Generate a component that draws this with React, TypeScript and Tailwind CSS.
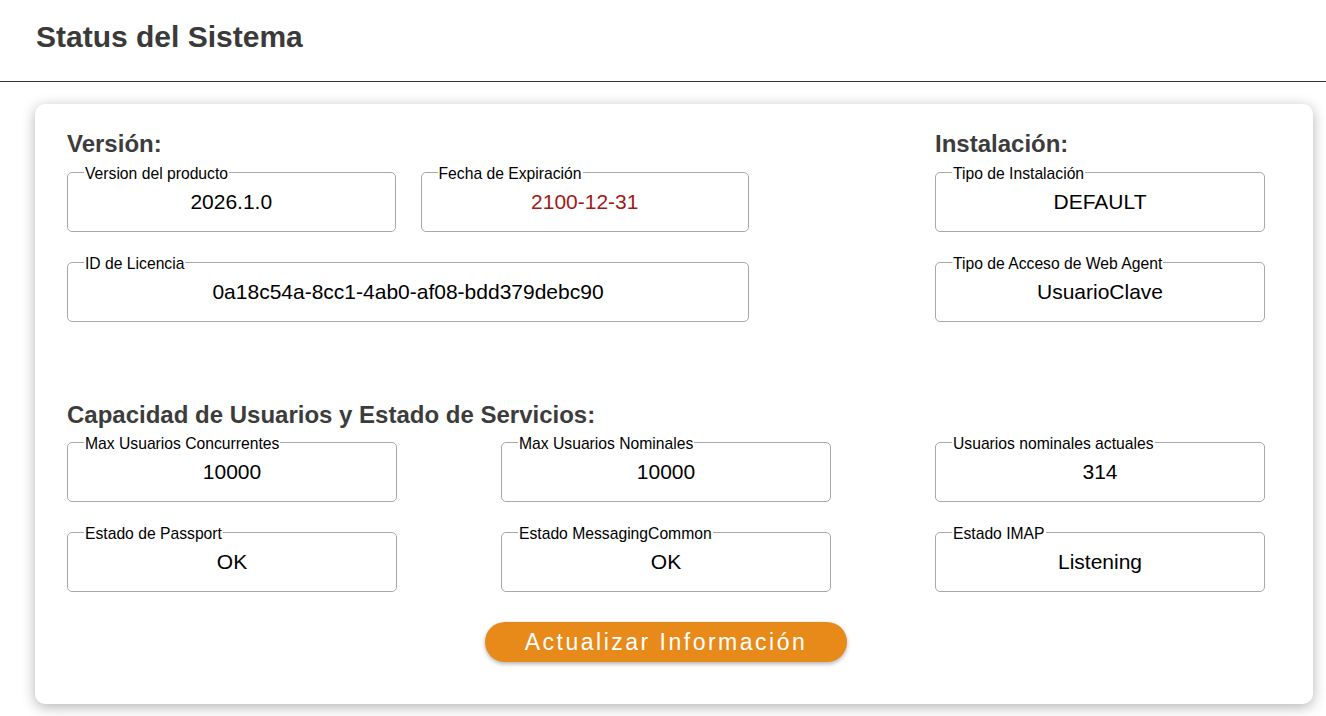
const font = { fontFamily: '"Liberation Sans", Arial, sans-serif' };

type Field = { label: string; value: string; red?: boolean };

function Box({ label, value, red }: Field) {
  return (
    <div className="relative flex h-[60px] items-center justify-center rounded-[5px] border border-[#a8a8a8] bg-white">
      <span className="absolute left-[16px] top-[-7px] bg-white px-[1px] text-[15.7px] leading-[16px] text-black">
        {label}
      </span>
      <span className={`text-[21px] leading-[24px] ${red ? "text-[#a31818]" : "text-black"}`}>{value}</span>
    </div>
  );
}

function Heading({ children }: { children: React.ReactNode }) {
  return <h2 className="text-[24px] font-bold leading-[28px] text-[#3c3c3c]">{children}</h2>;
}

const capacity: Field[] = [
  { label: "Max Usuarios Concurrentes", value: "10000" },
  { label: "Max Usuarios Nominales", value: "10000" },
  { label: "Usuarios nominales actuales", value: "314" },
  { label: "Estado de Passport", value: "OK" },
  { label: "Estado MessagingCommon", value: "OK" },
  { label: "Estado IMAP", value: "Listening" },
];

export default function App() {
  return (
    <div className="min-h-[716px] bg-white" style={font}>
      <header className="h-[82px] border-b border-[#333] px-[36px] pt-[19px]">
        <h1 className="text-[30px] font-bold leading-[36px] text-[#3a3a3a]">Status del Sistema</h1>
      </header>

      <main className="ml-[35px] mr-[13px] pt-[22px]">
        <div className="rounded-[10px] bg-white pb-[42px] pl-8 pr-[48px] pt-[26px] shadow-[0_3px_14px_rgba(0,0,0,0.3)]">
          <div className="flex justify-between">
            <div className="w-[682px]">
              <Heading>Versión:</Heading>
              <div className="mt-[14px] grid grid-cols-2 gap-x-[25px] gap-y-[30px]">
                <Box label="Version del producto" value="2026.1.0" />
                <Box label="Fecha de Expiración" value="2100-12-31" red />
                <div className="col-span-2">
                  <Box label="ID de Licencia" value="0a18c54a-8cc1-4ab0-af08-bdd379debc90" />
                </div>
              </div>
            </div>
            <div className="w-[330px]">
              <Heading>Instalación:</Heading>
              <div className="mt-[14px] flex flex-col gap-[30px]">
                <Box label="Tipo de Instalación" value="DEFAULT" />
                <Box label="Tipo de Acceso de Web Agent" value="UsuarioClave" />
              </div>
            </div>
          </div>

          <div className="mt-[79px]">
            <Heading>Capacidad de Usuarios y Estado de Servicios:</Heading>
            <div className="mt-[13px] grid grid-cols-[330px_330px_330px] justify-between gap-y-[30px]">
              {capacity.map((f) => (
                <Box key={f.label} {...f} />
              ))}
            </div>
          </div>

          <div className="mt-[30px] flex justify-center">
            <button className="h-[40px] w-[362px] rounded-full bg-[#e88a1a] text-[23px] leading-[26px] tracking-[2.5px] text-white shadow-[0_2px_4px_rgba(0,0,0,0.3)]">
              Actualizar Información
            </button>
          </div>
        </div>
      </main>
    </div>
  );
}
